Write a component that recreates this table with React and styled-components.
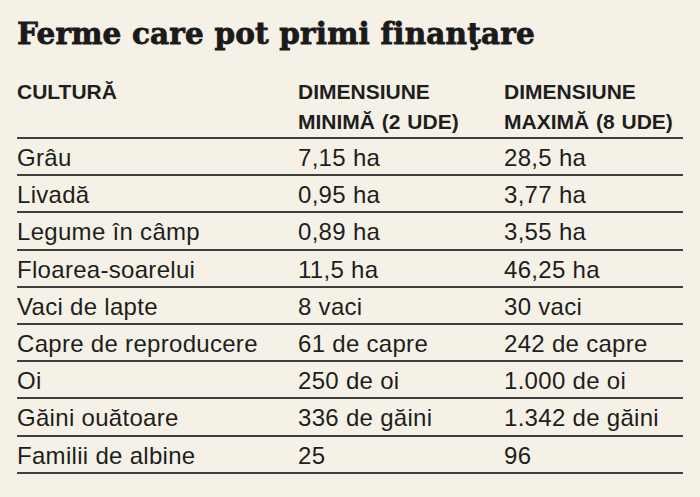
import React from 'react';
import styled, { createGlobalStyle } from 'styled-components';

const GlobalStyle = createGlobalStyle`
  html, body {
    margin: 0;
    padding: 0;
    background: #f5f1e6;
  }
  body {
    font-family: 'Liberation Sans', Arial, sans-serif;
    color: #1e1e1e;
  }
`;

const Page = styled.section`
  width: 700px;
  height: 497px;
  padding: 19px 0 0 17px;
  box-sizing: border-box;
  background: #f5f1e6;
`;

const Title = styled.h1`
  margin: 0 0 28px 0;
  font-family: 'DejaVu Serif', 'Liberation Serif', serif;
  font-weight: 700;
  font-size: 29.5px;
  line-height: 30px;
  letter-spacing: 0.17px;
  color: #1a1a1a;
  -webkit-text-stroke: 0.8px #1a1a1a;
`;

const Table = styled.table`
  width: 666px;
  border-collapse: collapse;
  table-layout: fixed;
`;

const HeadCell = styled.th`
  width: ${(p) => p.$width}px;
  padding: 0;
  text-align: left;
  vertical-align: top;
  font-size: 21px;
  font-weight: 700;
  line-height: 30px;
  letter-spacing: 0;
  word-spacing: 1px;
  color: #1e1e1e;
  border-bottom: 2px solid #3f3f3f;
  white-space: nowrap;
`;

const Row = styled.tr`
  border-bottom: 2px solid #3f3f3f;
`;

const Cell = styled.td`
  padding: 2px 0 0 0;
  font-size: 24px;
  line-height: 33.2px;
  letter-spacing: 0.3px;
  color: #1e1e1e;
  white-space: nowrap;
`;

const rows = [
  ['Grâu', '7,15 ha', '28,5 ha'],
  ['Livadă', '0,95 ha', '3,77 ha'],
  ['Legume în câmp', '0,89 ha', '3,55 ha'],
  ['Floarea-soarelui', '11,5 ha', '46,25 ha'],
  ['Vaci de lapte', '8 vaci', '30 vaci'],
  ['Capre de reproducere', '61 de capre', '242 de capre'],
  ['Oi', '250 de oi', '1.000 de oi'],
  ['Găini ouătoare', '336 de găini', '1.342 de găini'],
  ['Familii de albine', '25', '96'],
];

export default function App() {
  return (
    <>
      <GlobalStyle />
      <Page>
        <Title>Ferme care pot primi finanţare</Title>
        <Table>
          <thead>
            <tr>
              <HeadCell $width={281}>CULTURĂ</HeadCell>
              <HeadCell $width={206}>
                DIMENSIUNE
                <br />
                MINIMĂ (2 UDE)
              </HeadCell>
              <HeadCell $width={179}>
                DIMENSIUNE
                <br />
                MAXIMĂ (8 UDE)
              </HeadCell>
            </tr>
          </thead>
          <tbody>
            {rows.map((r) => (
              <Row key={r[0]}>
                <Cell>{r[0]}</Cell>
                <Cell>{r[1]}</Cell>
                <Cell>{r[2]}</Cell>
              </Row>
            ))}
          </tbody>
        </Table>
      </Page>
    </>
  );
}
